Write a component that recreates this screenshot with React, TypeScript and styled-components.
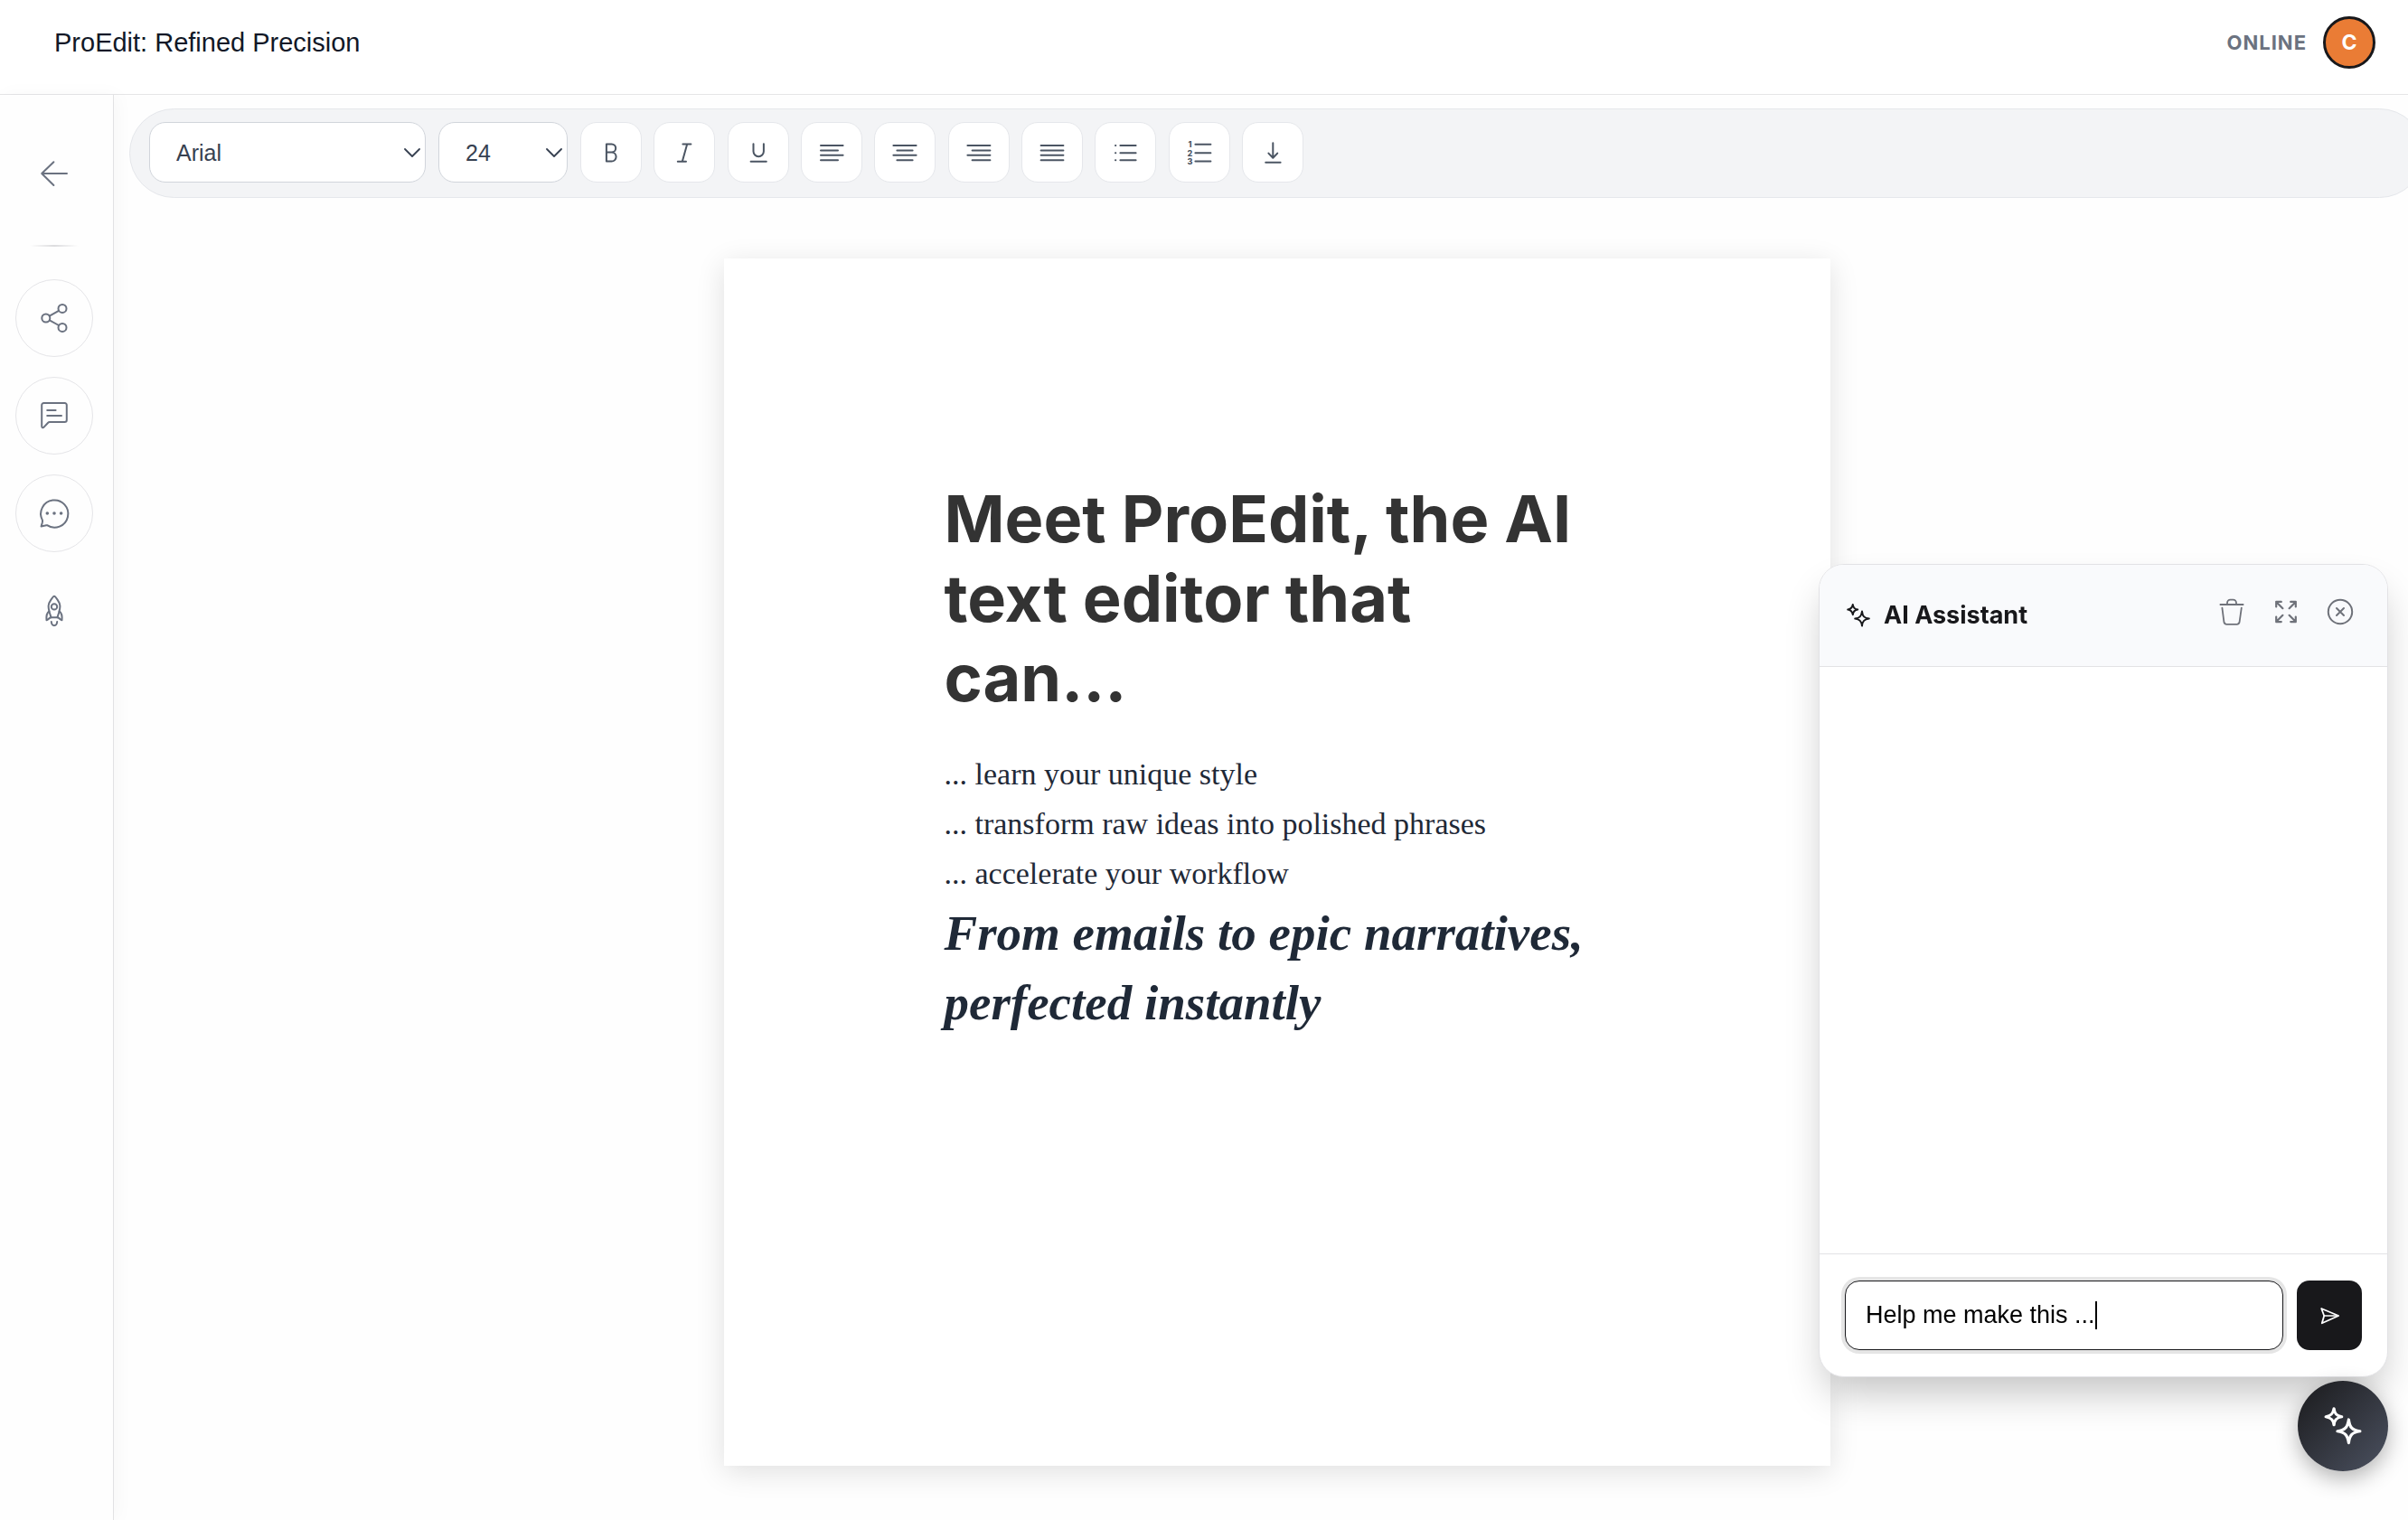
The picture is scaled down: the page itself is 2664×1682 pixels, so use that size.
import React, { useLayoutEffect, useRef, useState } from "react";
import styled, { createGlobalStyle } from "styled-components";

const sans = `"Liberation Sans", Arial, sans-serif`;
const inter = `Inter, "Liberation Sans", sans-serif`;
const serif = `"Liberation Serif", Georgia, serif`;

const GlobalStyle = createGlobalStyle`
  *, *::before, *::after { box-sizing: border-box; }
  body { margin: 0; background: #fefefe; color: #1f2937; font-family: ${sans}; }
  button { padding: 0; border: 0; background: none; cursor: pointer; }
`;

/* ---------- frame ---------- */

const Page = styled.div`
  display: flex;
  flex-direction: column;
  min-height: 100vh;
  overflow: hidden;
`;

const Header = styled.header`
  display: flex;
  align-items: center;
  justify-content: space-between;
  padding: 18px 36px 28px 60px;
  border-bottom: 1px solid #e5e5e7;
  background: #fff;
`;

const Title = styled.h1`
  margin: 0;
  font-size: 29px;
  font-weight: 400;
  line-height: 36px;
  color: #111827;
`;

const Account = styled.div`
  display: flex;
  align-items: center;
  gap: 18px;
`;

const Status = styled.span`
  font: 700 22px/28px ${inter};
  letter-spacing: 1px;
  color: #6b7280;
`;

const Avatar = styled.button`
  width: 58px;
  height: 58px;
  border: 3px solid #18181b;
  border-radius: 50%;
  background: #ea7c35;
  color: #fff;
  font: 700 23px/28px ${inter};
`;

const Body = styled.div`
  display: flex;
  flex: 1;
`;

/* ---------- side navigation ---------- */

const Sidebar = styled.nav`
  display: flex;
  flex: none;
  flex-direction: column;
  gap: 22px;
  padding: 44px 22px 44px 17px;
  border-right: 1px solid #e2e2e4;
  background: #fefefe;
  box-shadow: 4px 0 20px rgba(0, 0, 0, 0.03);
`;

const NavButton = styled.button<{ $outlined?: boolean }>`
  display: grid;
  place-items: center;
  width: 86px;
  height: 86px;
  border: 1px solid ${(p) => (p.$outlined ? "#e5e5e8" : "transparent")};
  border-radius: 50%;
  color: #6b7280;
`;

const NavDivider = styled.hr`
  width: 54px;
  height: 2px;
  margin: 14px auto;
  border: 0;
  background: linear-gradient(90deg, transparent, #dcdcde, transparent);
`;

/* ---------- workspace ---------- */

const Main = styled.main`
  flex: 1;
  min-width: 0;
  padding: 15px 0 60px 17px;
`;

const Workspace = styled.div`
  display: flex;
  flex-direction: column;
  align-items: center;
  gap: 67px;
  margin-right: -18px;
`;

const Toolbar = styled.div`
  display: flex;
  align-self: stretch;
  gap: 14px;
  padding: 14px 21px 16px;
  border: 1px solid #e5e7eb;
  border-radius: 50px;
  background: #f3f4f6;
`;

const SelectBox = styled.span<{ $width: number }>`
  position: relative;
  width: ${(p) => p.$width}px;
  color: #374151;

  svg {
    position: absolute;
    top: 29px;
    right: 6px;
    pointer-events: none;
  }
`;

const Select = styled.select`
  appearance: none;
  width: 100%;
  height: 67px;
  padding: 0 40px 0 29px;
  border: 1px solid #d1d5db;
  border-radius: 18px;
  background: #fff;
  color: inherit;
  font: 25px/30px ${sans};
`;

const ToolGroup = styled.div`
  display: flex;
  justify-content: space-between;
  width: 800px;
`;

const ToolButton = styled.button`
  display: grid;
  place-items: center;
  width: 68px;
  height: 67px;
  border: 1px solid #e5e7eb;
  border-radius: 18px;
  background: #fff;
  color: #4b5563;
`;

const Paper = styled.article`
  width: 1224px;
  min-height: 1336px;
  padding: 244px 260px 244px 244px;
  background: #fff;
  box-shadow: 0 7px 30px rgba(0, 0, 0, 0.12);
`;

const Headline = styled.h2`
  margin: 0 0 35px;
  font: 700 72px/88px ${inter};
  color: #333;
`;

const Line = styled.p`
  margin: 0;
  font: 34px/55px ${serif};
  color: #1f2937;
`;

const Closing = styled.p`
  margin: 0;
  font: italic 700 55px/77px ${serif};
  color: #1f2937;
`;

/* ---------- assistant ---------- */

const Assistant = styled.section`
  position: fixed;
  right: 22px;
  bottom: 158px;
  display: flex;
  flex-direction: column;
  width: 630px;
  height: 900px;
  border: 1px solid #e2e2e5;
  border-radius: 28px;
  background: #fff;
  box-shadow: 0 24px 44px -8px rgba(0, 0, 0, 0.24);
  overflow: hidden;
`;

const AssistantHeader = styled.header`
  display: flex;
  align-items: flex-start;
  justify-content: space-between;
  padding: 28px;
  border-bottom: 1px solid #e2e2e5;
  background: #f9fafc;
`;

const AssistantTitle = styled.h2`
  display: flex;
  align-items: center;
  gap: 13px;
  margin: 0;
  font: 700 27px/56px ${inter};
  color: #18181b;
`;

const Actions = styled.div`
  display: flex;
  gap: 12px;
`;

const ActionButton = styled.button`
  display: grid;
  place-items: center;
  width: 48px;
  height: 48px;
  color: #6f727a;
`;

const Messages = styled.div`
  flex: 1;
`;

const Composer = styled.form`
  display: flex;
  gap: 15px;
  padding: 29px 28px;
  border-top: 1px solid #e2e2e5;
`;

const Field = styled.span`
  position: relative;
  flex: 1;
`;

const Prompt = styled.input`
  width: 100%;
  height: 77px;
  padding: 0 22px;
  border: 1px solid #18181b;
  border-radius: 16px;
  outline: 0;
  background: #fff;
  box-shadow: 0 0 0 4px rgba(0, 0, 0, 0.1);
  caret-color: transparent;
  color: #000;
  font: 27px/32px ${sans};
`;

const Caret = styled.span`
  position: absolute;
  top: 23px;
  width: 2px;
  height: 31px;
  background: #000;
`;

const SendButton = styled.button`
  display: grid;
  place-items: center;
  width: 72px;
  height: 77px;
  border-radius: 14px;
  background: #18181b;
  color: #fff;
`;

const Launcher = styled.button`
  position: fixed;
  right: 22px;
  bottom: 54px;
  display: grid;
  place-items: center;
  width: 100px;
  height: 100px;
  border-radius: 50%;
  background: linear-gradient(135deg, #1a1a1c, #4b5160);
  box-shadow: 0 8px 24px rgba(0, 0, 0, 0.3);
  color: #fff;
`;

/* ---------- icons ---------- */

type IconProps = { box: number; size?: number; stroke?: number; children: React.ReactNode };

const Icon = ({ box, size = box, stroke = 2, children }: IconProps) => (
  <svg
    width={size}
    height={size}
    viewBox={`0 0 ${box} ${box}`}
    fill="none"
    stroke="currentColor"
    strokeWidth={stroke}
    strokeLinecap="round"
    strokeLinejoin="round"
    overflow="visible"
    aria-hidden="true"
  >
    {children}
  </svg>
);

const Chevron = () => (
  <svg width="18" height="11" viewBox="0 0 18 11" fill="none" stroke="currentColor" strokeWidth="1.8" strokeLinecap="round" strokeLinejoin="round" aria-hidden="true">
    <path d="M1 1l8 8 8-8" />
  </svg>
);

const Sparkles = ({ size }: { size: number }) => (
  <Icon box={30} size={size}>
    <path d="M8.8 3C9.2 6.6 10.6 8 14.2 8.6C10.6 9.2 9.2 10.6 8.8 14.2C8.2 10.6 6.8 9.2 3.2 8.6C6.8 8 8.2 6.6 8.8 3Z" />
    <path d="M19 10.6C19.6 16 21.4 17.8 26.8 18.6C21.4 19.4 19.6 21.2 19 26.6C18.2 21.2 16.4 19.4 11.2 18.6C16.4 17.8 18.2 16 19 10.6Z" />
  </Icon>
);

const lines = (rows: [number, number][]) =>
  rows.map(([a, b], i) => `M${a} ${6 + i * 5.4}H${b}`).join("");

const tools: { label: string; art: React.ReactNode }[] = [
  {
    label: "Bold",
    art: <path d="M8.9 4.4V23.6M8.9 4.4H14.6A4.6 4.6 0 0 1 14.6 13.6H8.9M14.6 13.6A5 5 0 0 1 14.6 23.6H8.9" />,
  },
  { label: "Italic", art: <path d="M12.4 4.5H21.4M6.8 23.7H16M17.2 4.5L11.8 23.7" /> },
  { label: "Underline", art: <path d="M8.5 4.2V12.5A5.7 5.7 0 0 0 19.9 12.5V4.2M5.6 23.7H22.8" /> },
  { label: "Align left", art: <path d={lines([[2, 26.6], [2, 21], [2, 26.6], [2, 21]])} /> },
  { label: "Align center", art: <path d={lines([[1.4, 26.6], [5.4, 22.6], [1.4, 26.6], [5.4, 22.6]])} /> },
  { label: "Align right", art: <path d={lines([[1.4, 26.4], [6.6, 26.4], [1.4, 26.4], [6.6, 26.4]])} /> },
  { label: "Justify", art: <path d={lines([[1.6, 26.4], [1.6, 26.4], [1.6, 26.4], [1.6, 26.4]])} /> },
  {
    label: "Bulleted list",
    art: <path d="M3 6h.3M3 14.2h.3M3 22.3h.3M8.4 6H25.6M8.4 14.2H25.6M8.4 22.3H25.6" />,
  },
  {
    label: "Numbered list",
    art: (
      <>
        <path d="M9.4 4.8H26.4M9.4 14.2H26.4M9.4 23.6H26.4" />
        <g fill="currentColor" stroke="none" fontFamily="Inter, sans-serif" fontSize="9" fontWeight="800" textAnchor="middle">
          <text x="3.4" y="8.2">1</text>
          <text x="3.4" y="17.6">2</text>
          <text x="3.4" y="27">3</text>
        </g>
      </>
    ),
  },
  { label: "Download", art: <path d="M14.3 3.2V19.6M9.4 14.6L14.3 19.8L19.2 14.6M6.2 24.8H22.6" /> },
];

const navItems: { label: string; outlined: boolean; art: React.ReactNode }[] = [
  {
    label: "Share",
    outlined: true,
    art: (
      <>
        <circle cx="8.8" cy="18" r="4.5" />
        <circle cx="27" cy="7.4" r="4.5" />
        <circle cx="27" cy="28.4" r="4.5" />
        <path d="M12.8 15.7L23 9.8M12.8 20.3L23 26" />
      </>
    ),
  },
  {
    label: "Comments",
    outlined: true,
    art: (
      <>
        <path d="M6.4 4H29.6A2.2 2.2 0 0 1 31.8 6.2V22.8A2.2 2.2 0 0 1 29.6 25H12.8A2.2 2.2 0 0 0 11.2 25.7L6.6 30.6C5.6 31.8 4.2 31.4 4.2 29.8V6.2A2.2 2.2 0 0 1 6.4 4Z" />
        <path d="M10.2 12H19.6M10.2 18H26" />
      </>
    ),
  },
  {
    label: "Chat",
    outlined: true,
    art: (
      <>
        <path d="M4.9 25.6A15.1 15.1 0 1 1 10 31.2Q9 31 8 31.5L3.6 32.5L4.8 28.2Q5.2 26.6 4.9 25.6Z" />
        <g fill="currentColor" stroke="none">
          <circle cx="10.3" cy="18" r="1.8" />
          <circle cx="18" cy="18" r="1.8" />
          <circle cx="25.6" cy="18" r="1.8" />
        </g>
      </>
    ),
  },
  {
    label: "Launch",
    outlined: false,
    art: (
      <>
        <path d="M18 1.8C19 1.8 24.4 8.4 24.4 12.4C24.4 17.4 22.6 21.6 21.4 25.3H14.6C13.4 21.6 11.6 17.4 11.6 12.4C11.6 8.4 17 1.8 18 1.8Z" />
        <circle cx="18" cy="13.4" r="3.2" />
        <path d="M12.4 18.4C10 20 9 22.6 9.5 28.2C11.4 28.4 11.8 25.6 14.6 25.3M23.6 18.4C26 20 27 22.6 26.5 28.2C24.6 28.4 24.2 25.6 21.4 25.3" />
        <path d="M14.8 30C15 32.6 16.2 34.2 18 34.2C19.8 34.2 21 32.6 21.2 30" />
      </>
    ),
  },
];

const actions: { label: string; stroke: number; art: React.ReactNode }[] = [
  {
    label: "Clear conversation",
    stroke: 1.8,
    art: (
      <path d="M2.4 7H27.6M10 7V5A3.4 3.4 0 0 1 13.4 1.6H16.6A3.4 3.4 0 0 1 20 5V7M4.4 10.6L6.4 26.2A3 3 0 0 0 9.4 28.8H20.6A3 3 0 0 0 23.6 26.2L25.8 10.6" />
    ),
  },
  {
    label: "Expand",
    stroke: 2.2,
    art: (
      <path d="M4.2 9.4V3.9H9.8M4.2 3.9L11.4 11.2M20.2 3.9H25.8V9.4M25.8 3.9L18.6 11.2M4.2 20.6V26.1H9.8M4.2 26.1L11.4 18.8M20.2 26.1H25.8V20.6M25.8 26.1L18.6 18.8" />
    ),
  },
  {
    label: "Close",
    stroke: 2,
    art: (
      <>
        <circle cx="15" cy="15" r="13.2" />
        <path d="M11 11l8 8M19 11l-8 8" />
      </>
    ),
  },
];

/* ---------- assistant input ---------- */

function PromptField() {
  const [value, setValue] = useState("Help me make this ...");
  const [caretX, setCaretX] = useState(23);
  const ref = useRef<HTMLInputElement>(null);

  useLayoutEffect(() => {
    const ctx = document.createElement("canvas").getContext("2d");
    if (!ctx || !ref.current) return;
    ctx.font = getComputedStyle(ref.current).font;
    setCaretX(23 + Math.round(ctx.measureText(value).width));
  }, [value]);

  return (
    <Field>
      <Prompt ref={ref} type="text" aria-label="Message" value={value} onChange={(e) => setValue(e.target.value)} />
      <Caret style={{ left: caretX }} />
    </Field>
  );
}

export default function App() {
  return (
    <Page>
      <GlobalStyle />
      <Header>
        <Title>ProEdit: Refined Precision</Title>
        <Account>
          <Status>ONLINE</Status>
          <Avatar type="button">C</Avatar>
        </Account>
      </Header>

      <Body>
        <Sidebar aria-label="Document">
          <NavButton type="button" aria-label="Back">
            <Icon box={36}>
              <path d="M4.2 18H32M17.4 5.2L4.2 18L17.4 31" />
            </Icon>
          </NavButton>
          <NavDivider />
          {navItems.map((item) => (
            <NavButton key={item.label} type="button" aria-label={item.label} $outlined={item.outlined}>
              <Icon box={36}>{item.art}</Icon>
            </NavButton>
          ))}
        </Sidebar>

        <Main>
          <Workspace>
            <Toolbar role="toolbar" aria-label="Formatting">
              <SelectBox $width={306}>
                <Select aria-label="Font" defaultValue="Arial">
                  <option>Arial</option>
                  <option>Georgia</option>
                  <option>Inter</option>
                </Select>
                <Chevron />
              </SelectBox>
              <SelectBox $width={143}>
                <Select aria-label="Font size" defaultValue="24">
                  <option>16</option>
                  <option>24</option>
                  <option>32</option>
                </Select>
                <Chevron />
              </SelectBox>
              <ToolGroup>
                {tools.map((tool) => (
                  <ToolButton key={tool.label} type="button" aria-label={tool.label}>
                    <Icon box={28}>{tool.art}</Icon>
                  </ToolButton>
                ))}
              </ToolGroup>
            </Toolbar>

            <Paper>
              <Headline>Meet ProEdit, the AI text editor that can…</Headline>
              <Line>... learn your unique style</Line>
              <Line>... transform raw ideas into polished phrases</Line>
              <Line>... accelerate your workflow</Line>
              <Closing>From emails to epic narratives, perfected instantly</Closing>
            </Paper>
          </Workspace>
        </Main>
      </Body>

      <Assistant aria-label="AI Assistant">
        <AssistantHeader>
          <AssistantTitle>
            <Sparkles size={30} />
            AI Assistant
          </AssistantTitle>
          <Actions>
            {actions.map((action) => (
              <ActionButton key={action.label} type="button" aria-label={action.label}>
                <Icon box={30} stroke={action.stroke}>
                  {action.art}
                </Icon>
              </ActionButton>
            ))}
          </Actions>
        </AssistantHeader>
        <Messages />
        <Composer onSubmit={(e) => e.preventDefault()}>
          <PromptField />
          <SendButton type="submit" aria-label="Send">
            <Icon box={24} stroke={1.8}>
              <path d="M3.2 4L22.2 12L3.8 20.2L6.2 12Z" />
              <path d="M6.2 12H21" strokeOpacity="0.75" />
            </Icon>
          </SendButton>
        </Composer>
      </Assistant>

      <Launcher type="button" aria-label="Open AI Assistant">
        <Sparkles size={48} />
      </Launcher>
    </Page>
  );
}
